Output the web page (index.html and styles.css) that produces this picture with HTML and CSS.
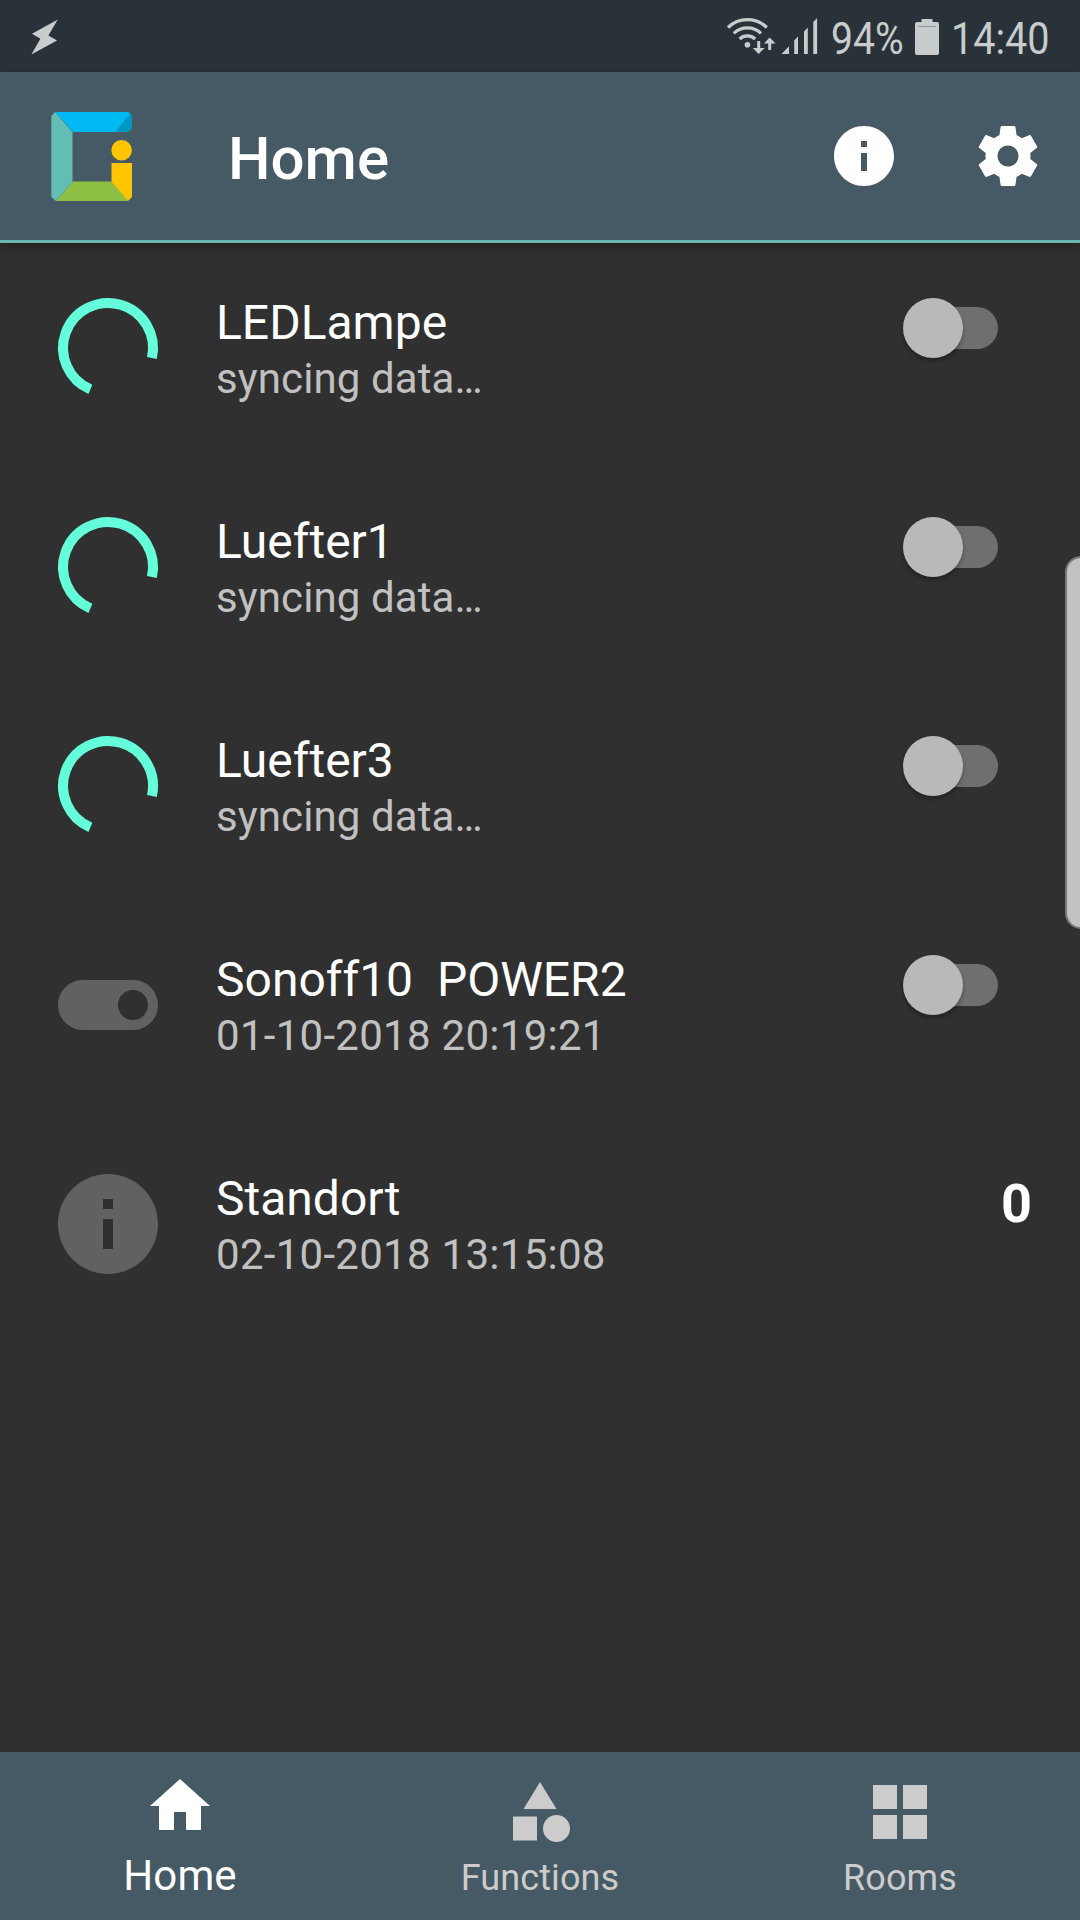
FILE: index.html
```
<!DOCTYPE html>
<html lang="en">
<head>
    <meta charset="UTF-8">
    <meta name="viewport" content="width=device-width, initial-scale=1.0">
    <title>Home</title>
    <link rel="stylesheet" href="styles.css">
</head>
<body>
    <div class="statusbar">
        <svg class="bolt" width="28" height="36" viewBox="31 19.5 28 36"><path d="M57.8 20 32 34.2l8.4 5L31.4 55 57 41l-8.6-5z"/></svg>
        <div class="status-icons">
            <svg width="94" height="40" viewBox="726 17 94 40">
                <g class="waves">
                    <path d="M728 27.5a28 28 0 0 1 38.8 0"/>
                    <path d="M733.8 33.3a20 20 0 0 1 27.2 0"/>
                    <path d="M739.6 39a11.5 11.5 0 0 1 15.6 0"/>
                </g>
                <circle cx="747.4" cy="44.7" r="2.8"/>
                <path d="M757.2 41h3v7h4.4l-5.900 6-5.900-6h4.400z"/>
                <path d="M768.2 50h3v-6.500h4.400l-5.900-6-5.900 6h4.400z"/>
                <path d="M781.5 54l7.500-7.700V54zM794.200 54V40.500l3.800-4V54zM804 54V31.500l3.800-4V54zM813.300 54V22l3.800-4v36z"/>
            </svg>
            <span class="percent">94%</span>
            <svg class="battery" width="24" height="36" viewBox="0 0 24 36">
                <path d="M6.500 0h11v3H22a2 2 0 0 1 2 2v29a2 2 0 0 1-2 2H2a2 2 0 0 1-2-2V5a2 2 0 0 1 2-2h4.500z"/>
                <path class="battery-line" d="M3.500 7.500h17"/>
            </svg>
            <span class="clock">14:40</span>
        </div>
    </div>

    <header class="toolbar">
        <svg class="logo" width="82" height="91" viewBox="51 111 82 91">
            <path fill="#62bdb5" d="M51.300 116l3.700-4 17.500 20v50L56 201l-4.700-4z"/>
            <path fill="#00b9f2" d="M55 112h73.500l3.500 4v12l-4.500 4H73z"/>
            <path fill="#0098c4" d="M130 114l2 2.500V128l-4.500 4h-12.500z"/>
            <path fill="#8dc044" d="M73 181.500h38.500L128 201H56z"/>
            <path fill="#fec500" d="M111.500 163H132v34l-4 4-16.500-19z"/>
            <circle fill="#fec500" cx="121.600" cy="150.300" r="10.300"/>
        </svg>
        <h1>Home</h1>
        <svg class="action" width="72" height="72" viewBox="0 0 24 24"><path d="M12 2C6.480 2 2 6.480 2 12s4.480 10 10 10 10-4.480 10-10S17.520 2 12 2zm1 15h-2v-6h2v6zm0-8h-2V7h2v2z"/></svg>
        <svg class="action" width="72" height="72" viewBox="0 0 24 24"><path d="M19.430 12.980c.04-.32.07-.64.07-.98s-.03-.66-.07-.98l2.110-1.650c.19-.15.24-.42.12-.64l-2-3.460c-.12-.22-.39-.3-.61-.22l-2.490 1c-.52-.4-1.080-.73-1.690-.98l-.38-2.650C14.460 2.180 14.250 2 14 2h-4c-.25 0-.46.18-.49.42l-.38 2.650c-.61.25-1.170.59-1.690.98l-2.490-1c-.23-.09-.49 0-.61.22l-2 3.460c-.13.22-.07.49.12.64l2.110 1.650c-.04.32-.07.65-.07.98s.03.66.07.98l-2.110 1.650c-.19.15-.24.42-.12.64l2 3.460c.12.22.39.3.61.22l2.490-1c.52.4 1.080.73 1.690.98l.38 2.650c.03.24.24.42.49.42h4c.25 0 .46-.18.49-.42l.38-2.650c.61-.25 1.170-.59 1.690-.98l2.490 1c.23.09.49 0 .61-.22l2-3.460c.12-.22.07-.49-.12-.64l-2.110-1.650zM12 15.500c-1.930 0-3.500-1.570-3.500-3.500s1.570-3.500 3.500-3.500 3.500 1.570 3.500 3.500-1.570 3.500-3.500 3.500z"/></svg>
    </header>

    <main class="devices">
        <div class="device">
            <svg class="spinner" width="120" height="120" viewBox="0 0 120 120"><path d="M103.900 70A45 45 0 1 0 42.400 101.400"/></svg>
            <div class="info">
                <div class="name">LEDLampe</div>
                <div class="state">syncing data…</div>
            </div>
            <div class="switch"><div class="thumb"></div></div>
        </div>
        <div class="device">
            <svg class="spinner" width="120" height="120" viewBox="0 0 120 120"><path d="M103.900 70A45 45 0 1 0 42.400 101.400"/></svg>
            <div class="info">
                <div class="name">Luefter1</div>
                <div class="state">syncing data…</div>
            </div>
            <div class="switch"><div class="thumb"></div></div>
        </div>
        <div class="device">
            <svg class="spinner" width="120" height="120" viewBox="0 0 120 120"><path d="M103.900 70A45 45 0 1 0 42.400 101.400"/></svg>
            <div class="info">
                <div class="name">Luefter3</div>
                <div class="state">syncing data…</div>
            </div>
            <div class="switch"><div class="thumb"></div></div>
        </div>
        <div class="device">
            <svg class="icon" width="120" height="120" viewBox="0 0 24 24"><path d="M17 7H7c-2.760 0-5 2.240-5 5s2.240 5 5 5h10c2.760 0 5-2.240 5-5s-2.240-5-5-5zm0 8c-1.660 0-3-1.340-3-3s1.340-3 3-3 3 1.340 3 3-1.340 3-3 3z"/></svg>
            <div class="info">
                <div class="name">Sonoff10&nbsp; POWER2</div>
                <div class="state date">01-10-2018 20:19:21</div>
            </div>
            <div class="switch"><div class="thumb"></div></div>
        </div>
        <div class="device">
            <svg class="icon" width="120" height="120" viewBox="0 0 24 24"><path d="M12 2C6.480 2 2 6.480 2 12s4.480 10 10 10 10-4.480 10-10S17.520 2 12 2zm1 15h-2v-6h2v6zm0-8h-2V7h2v2z"/></svg>
            <div class="info">
                <div class="name">Standort</div>
                <div class="state date">02-10-2018 13:15:08</div>
            </div>
            <div class="value">0</div>
        </div>
    </main>

    <nav class="bottom-nav">
        <div class="tab active">
            <svg width="72" height="72" viewBox="0 0 24 24"><path d="M10 20v-6h4v6h5v-8h3L12 3 2 12h3v8z"/></svg>
            <span>Home</span>
        </div>
        <div class="tab">
            <svg width="72" height="72" viewBox="0 0 24 24"><path d="M12 2l-5.500 9h11z"/><circle cx="17.500" cy="17.500" r="4.500"/><path d="M3 13.500h8v8H3z"/></svg>
            <span>Functions</span>
        </div>
        <div class="tab">
            <svg width="72" height="72" viewBox="0 0 24 24"><path d="M3 3h8v8H3zM13 3h8v8h-8zM3 13h8v8H3zM13 13h8v8h-8z"/></svg>
            <span>Rooms</span>
        </div>
    </nav>

    <div class="edge-handle"></div>
</body>
</html>
```
FILE: styles.css
```
* {
    box-sizing: border-box;
}

body {
    margin: 0;
    width: 1080px;
    height: 1920px;
    display: flex;
    flex-direction: column;
    position: relative;
    overflow: hidden;
    background-color: #303030;
    color: white;
    font-family: Roboto, sans-serif;
}

svg {
    display: block;
    flex: none;
    fill: currentColor;
}

.statusbar {
    height: 72px;
    padding: 0 30px 0 31px;
    display: flex;
    justify-content: space-between;
    background-color: #283238;
    color: #c9cccd;
    font-size: 45px;
    line-height: 53px;
}

.bolt {
    margin-top: 19px;
}

.status-icons {
    display: flex;
    padding-top: 12px;
}

.status-icons svg {
    margin-top: 5px;
}

.waves {
    fill: none;
    stroke: currentColor;
    stroke-width: 3.2;
}

.percent {
    width: 72px;
    margin-left: 11px;
    transform: scaleX(0.87);
    transform-origin: left;
}

.status-icons .battery {
    margin: 7px 0 0 12px;
}

.battery-line {
    stroke: #90979a;
    stroke-width: 1;
}

.clock {
    width: 99px;
    margin-left: 12px;
    transform: scaleX(0.88);
    transform-origin: left;
}

.toolbar {
    height: 171px;
    flex: none;
    display: flex;
    align-items: center;
    padding: 0 36px 0 51px;
    background-color: #455a64;
    border-bottom: 3px solid #6cb8b1;
    box-shadow: 0 4px 10px rgba(0, 0, 0, 0.3);
}

.toolbar h1 {
    flex: 1;
    margin: 5px 0 0 95px;
    font-size: 60px;
    font-weight: 500;
    line-height: 70px;
}

.action + .action {
    margin-left: 72px;
}

.devices {
    flex: 1;
    padding-top: 15px;
}

.device {
    height: 219px;
    padding: 30px 48px;
    display: flex;
    align-items: flex-start;
}

.spinner path {
    fill: none;
    stroke: #64ffda;
    stroke-width: 10;
}

.icon {
    color: #616161;
}

.info {
    flex: 1;
    padding: 7px 0 0 48px;
}

.name {
    font-size: 48px;
    line-height: 56px;
}

.state {
    margin-top: 3px;
    font-size: 42px;
    line-height: 50px;
    letter-spacing: 0.1px;
    color: #c1c1c1;
}

.date {
    letter-spacing: 0.28px;
}

.switch {
    width: 90px;
    height: 42px;
    margin: 19px 34px 0 0;
    display: flex;
    align-items: center;
    border-radius: 21px;
    background-color: #6f6f6f;
}

.thumb {
    width: 60px;
    height: 60px;
    flex: none;
    margin-left: -5.5px;
    border-radius: 50%;
    background-color: #b9b9b9;
    box-shadow: 0 3px 4px rgba(0, 0, 0, 0.3);
}

.value {
    padding-top: 8px;
    font-size: 54px;
    font-weight: bold;
    line-height: 64px;
}

.bottom-nav {
    height: 168px;
    flex: none;
    display: flex;
    background-color: #455a64;
}

.tab {
    flex: 1;
    display: flex;
    flex-direction: column;
    align-items: center;
    padding-top: 24px;
    color: #cccccc;
    font-size: 36px;
    line-height: 42px;
    letter-spacing: 0.1px;
}

.tab span {
    margin-top: 9px;
}

.tab.active {
    padding-top: 18px;
    color: white;
    font-size: 42px;
    line-height: 50px;
}

/* pull-out handle on the right screen edge */
.edge-handle {
    position: absolute;
    top: 556px;
    right: -6px;
    width: 21px;
    height: 373px;
    border: 2px solid #777777;
    border-radius: 16px 0 0 16px;
    background-color: #c2c2c2;
}
```
